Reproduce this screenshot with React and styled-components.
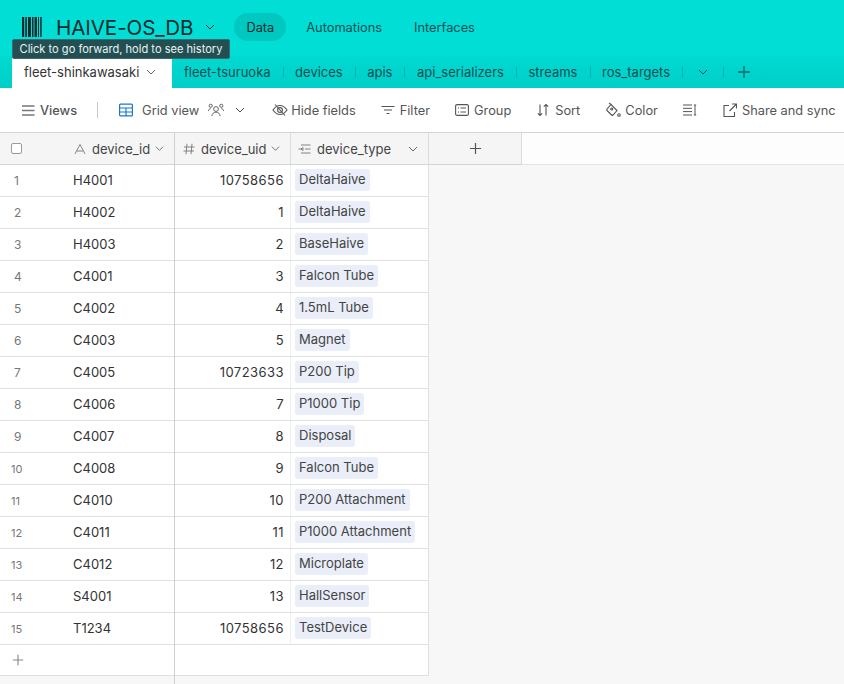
import React from 'react';
import styled, { createGlobalStyle } from 'styled-components';

const rows = [
  ['H4001', '10758656', 'DeltaHaive'],
  ['H4002', '1', 'DeltaHaive'],
  ['H4003', '2', 'BaseHaive'],
  ['C4001', '3', 'Falcon Tube'],
  ['C4002', '4', '1.5mL Tube'],
  ['C4003', '5', 'Magnet'],
  ['C4005', '10723633', 'P200 Tip'],
  ['C4006', '7', 'P1000 Tip'],
  ['C4007', '8', 'Disposal'],
  ['C4008', '9', 'Falcon Tube'],
  ['C4010', '10', 'P200 Attachment'],
  ['C4011', '11', 'P1000 Attachment'],
  ['C4012', '12', 'Microplate'],
  ['S4001', '13', 'HallSensor'],
  ['T1234', '10758656', 'TestDevice'],
];

const tabs = ['fleet-tsuruoka', 'devices', 'apis', 'api_serializers', 'streams', 'ros_targets'];

const Chevron = ({ size = 10, color = 'currentColor' }) => (
  <svg width={size} height={size} viewBox="0 0 10 10" fill="none" stroke={color} strokeWidth="1">
    <path d="M1 3l4 4 4-4" />
  </svg>
);

const Plus = ({ size = 14, color = 'currentColor' }) => (
  <svg width={size} height={size} viewBox="0 0 14 14" fill="none" stroke={color} strokeWidth="1.3">
    <path d="M7 1v12M1 7h12" />
  </svg>
);

const Icon = ({ w = 16, h = 16, children, color = '#555', sw = 1.1 }) => (
  <svg width={w} height={h} viewBox={`0 0 ${w} ${h}`} fill="none" stroke={color} strokeWidth={sw}>
    {children}
  </svg>
);

function App() {
  return (
    <Page>
      <GlobalStyle />
      <Header>
        <TopBar>
          <Barcode width="20" height="20" viewBox="0 0 20 20" fill="#0c2b2e">
            <path d="M0 0h2.200v20H0zM3.200 0h1.800v20H3.200zM6 0h3v20H6zM10 0h1.500v20H10zM12.500 0h2.500v20h-2.500zM16 0h1v20h-1zM18 0h.8v20H18zM19.300 0h.7v20h-.7z" />
          </Barcode>
          <BaseName>HAIVE-OS_DB</BaseName>
          <BaseChevron><Chevron color="#0c2b2e" /></BaseChevron>
          <NavPill $active>Data</NavPill>
          <NavPill>Automations</NavPill>
          <NavPill>Interfaces</NavPill>
        </TopBar>
        <TabBar>
          <ActiveTab>fleet-shinkawasaki<Chevron color="#666" /></ActiveTab>
          {tabs.map((t, i) => (
            <Tab key={t} $first={i === 0}>{t}</Tab>
          ))}
          <ChevronTab><Chevron color="#0a4d50" /></ChevronTab>
          <AddTab><Plus color="#0a6466" /></AddTab>
        </TabBar>
        <Tooltip>Click to go forward, hold to see history</Tooltip>
      </Header>

      <Toolbar>
        <ToolItem $left={22} $gap={5} $strong>
          <Icon w={13} h={13} color="#777" sw={1.4}><path d="M0 2h12.500M0 6.500h12.500M0 11h12.500" /></Icon>
          Views
        </ToolItem>
        <Divider />
        <ToolItem $left={21} $gap={9}>
          <Icon w={14} h={14} color="#1a76d2" sw={1.2}>
            <rect x=".6" y="1.100" width="12.800" height="11.800" rx="1" />
            <path d="M.6 5h12.800M.6 9h12.800M7 5v8" />
          </Icon>
          Grid view
        </ToolItem>
        <ToolItem $left={9}>
          <Icon w={16} h={14} sw={.9}>
            <circle cx="8" cy="6" r="2.400" />
            <path d="M3.800 13c.4-2.500 2-3.800 4.200-3.800s3.800 1.300 4.200 3.800" />
            <circle cx="2.700" cy="2.800" r="1.600" />
            <circle cx="13.300" cy="2.800" r="1.600" />
            <path d="M.3 8c.3-1.400 1-2.200 2.400-2.400M15.700 8c-.3-1.400-1-2.200-2.400-2.400" />
          </Icon>
        </ToolItem>
        <ToolItem $left={11}><Chevron color="#555" /></ToolItem>
        <ToolItem $left={27} $gap={3}>
          <Icon>
            <path d="M1 8c2-3 4.300-4.500 7-4.500S13 5 15 8c-2 3-4.300 4.500-7 4.500S3 11 1 8z" />
            <circle cx="8" cy="8" r="2.400" />
            <path d="M3 2.500l10 11" />
          </Icon>
          Hide fields
        </ToolItem>
        <ToolItem $left={25} $gap={5}>
          <Icon w={14} h={12} sw={1.2}><path d="M.5 2.500h13M3 6h8M5.500 9.500h3" /></Icon>
          Filter
        </ToolItem>
        <ToolItem $left={25} $gap={5}>
          <Icon w={14} h={14}>
            <rect x=".6" y="1.600" width="12.800" height="10.800" rx="1.500" />
            <path d="M3 5h1M5.500 5h5.500M3 9h1M5.500 9h5.500" />
          </Icon>
          Group
        </ToolItem>
        <ToolItem $left={26} $gap={6}>
          <Icon w={12} h={14}><path d="M3 1.500v11M.8 10.300L3 12.500l2.200-2.200M9 12.500v-11M6.800 3.700L9 1.500l2.200 2.200" /></Icon>
          Sort
        </ToolItem>
        <ToolItem $left={25} $gap={4}>
          <Icon>
            <path d="M6 2.500l6 6-4 4.500a1 1 0 0 1-1.400 0L2 8.500a1 1 0 0 1 0-1.400z" />
            <path d="M4 1l2 1.500" />
            <circle cx="6.700" cy="7" r="1" />
            <circle cx="14" cy="13" r="1.300" />
          </Icon>
          Color
        </ToolItem>
        <ToolItem $left={25}>
          <Icon w={14} h={12} sw={1}><path d="M0 1h9M0 4.300h9M0 7.600h9M0 11h9M12 1v10M10.800 1h2.400M10.800 11h2.400" /></Icon>
        </ToolItem>
        <ToolItem $left={26} $gap={5}>
          <Icon w={14} h={14}>
            <path d="M6 2.500H1v11h10.500V9" />
            <path d="M6.500 8L13 1.500M9 1h4.500v4.500" />
          </Icon>
          Share and sync
        </ToolItem>
      </Toolbar>

      <Grid>
        <LeftPane>
          <HeadRow>
            <CheckCell><CheckBox /></CheckCell>
            <HeadCell $pad={26}>
              <FieldIcon>
                <Icon w={12} h={12} color="#777" sw={.9}><path d="M1 11L6 1.500 11 11M3 8h6" /></Icon>
              </FieldIcon>
              <FieldName>device_id</FieldName>
              <Chevron size={9} color="#666" />
            </HeadCell>
          </HeadRow>
          {rows.map((r, i) => (
            <Row key={i}>
              <RowNumber $small={i >= 9}>{i + 1}</RowNumber>
              <IdCell>{r[0]}</IdCell>
            </Row>
          ))}
          <AddRow><Plus color="#888" size={12} /></AddRow>
        </LeftPane>
        <RightPane>
          <HeadRow>
            <HeadCell $w={116} $border $pad={8}>
              <FieldIcon>
                <Icon w={12} h={12} color="#777" sw={.9}><path d="M4 .8L3 11.200M9 .8L8 11.200M1 4h10.500M.5 8h10.500" /></Icon>
              </FieldIcon>
              <FieldName>device_uid</FieldName>
              <Chevron size={9} color="#666" />
            </HeadCell>
            <HeadCell $w={138} $border $pad={7}>
              <FieldIcon>
                <Icon w={13} h={12} color="#777" sw={.9}><path d="M3 2h9.500M.5 6h3.500M7 6h5.500M3 10h9.500M3 6l2-1.500v3z" /></Icon>
              </FieldIcon>
              <FieldName>device_type</FieldName>
              <TypeChevron><Chevron size={10} color="#666" /></TypeChevron>
            </HeadCell>
            <AddColumn><Plus color="#555" size={13} /></AddColumn>
            <HeadFiller />
          </HeadRow>
          {rows.map((r, i) => (
            <DataRow key={i}>
              <UidCell>{r[1]}</UidCell>
              <TypeCell><Chip>{r[2]}</Chip></TypeCell>
            </DataRow>
          ))}
          <EmptyRow />
        </RightPane>
      </Grid>
    </Page>
  );
}

const GlobalStyle = createGlobalStyle`
  html, body {
    margin: 0;
    padding: 0;
    height: 100%;
    overflow: hidden;
  }
  #root {
    height: 100%;
  }
  * {
    box-sizing: border-box;
  }
`;

const Page = styled.div`
  position: relative;
  display: flex;
  flex-direction: column;
  width: 844px;
  height: 684px;
  overflow: hidden;
  font-family: Inter, "Liberation Sans", sans-serif;
  font-size: 13px;
  color: #333;
  background: #f7f7f7;
`;

const Header = styled.div`
  flex: none;
  height: 88px;
  background: #00ded6;
`;

const TopBar = styled.div`
  display: flex;
  align-items: center;
  height: 56px;
  padding: 0 0 2px 22px;
`;

const Barcode = styled.svg`
  flex: none;
  margin-right: 14px;
`;

const BaseName = styled.div`
  font-size: 20.600px;
  font-weight: 400;
  color: #0c2b2e;
  letter-spacing: -0.1px;
`;

const BaseChevron = styled.div`
  display: flex;
  margin: 0 19px 0 12px;
`;

const NavPill = styled.div`
  height: 28px;
  padding: 0 12px;
  margin-right: 8px;
  display: flex;
  align-items: center;
  border-radius: 14px;
  font-size: 12.800px;
  color: ${(p) => (p.$active ? '#0c2b2e' : '#0a4d50')};
  background: ${(p) => (p.$active ? '#00c8c1' : 'transparent')};
`;

const TabBar = styled.div`
  display: flex;
  align-items: center;
  height: 32px;
  padding-left: 12px;
  background: linear-gradient(#00d9d1, #00cfc8);
`;

const ActiveTab = styled.div`
  display: flex;
  align-items: center;
  gap: 7px;
  width: 160px;
  height: 32px;
  padding-left: 12px;
  font-size: 13px;
  color: #333;
  background: #fff;
  border-radius: 3px 3px 0 0;
`;

const Tab = styled.div`
  display: flex;
  align-items: center;
  height: 32px;
  padding: 0 12px 0 ${(p) => (p.$first ? 12 : 12.5)}px;
  font-size: 13px;
  color: #0a4d50;
  position: relative;
  &::before {
    content: '';
    display: ${(p) => (p.$first ? 'none' : 'block')};
    position: absolute;
    left: 0;
    top: 10px;
    height: 12px;
    width: 1px;
    background: #00b5ae;
  }
`;

const ChevronTab = styled(Tab)`
  width: 41px;
  padding: 0 0 0 16px;
`;

const AddTab = styled(Tab)`
  padding: 0 15px 0 14px;
`;

const Tooltip = styled.div`
  position: absolute;
  left: 12px;
  top: 39px;
  width: 218px;
  height: 20px;
  display: flex;
  align-items: center;
  justify-content: center;
  font-size: 11.100px;
  color: #e8f4f4;
  background: #234f53;
  border: 1px solid #3f6a6d;
  border-radius: 2px;
`;

const Toolbar = styled.div`
  flex: none;
  display: flex;
  align-items: center;
  height: 45px;
  background: #fff;
  border-bottom: 1px solid #d4d4d4;
  white-space: nowrap;
`;

const ToolItem = styled.div`
  flex: none;
  display: flex;
  align-items: center;
  gap: ${(p) => p.$gap || 0}px;
  margin-left: ${(p) => p.$left}px;
  font-size: 12.800px;
  font-weight: ${(p) => (p.$strong ? 500 : 400)};
  color: #555;
`;

const Divider = styled.div`
  flex: none;
  width: 1px;
  height: 16px;
  margin-left: 20px;
  background: #c8c8c8;
`;

const Grid = styled.div`
  flex: 1;
  display: flex;
  min-height: 0;
`;

const LeftPane = styled.div`
  flex: none;
  width: 175px;
  border-right: 1px solid #cfcfcf;
`;

const RightPane = styled.div`
  flex: 1;
`;

const HeadRow = styled.div`
  display: flex;
  height: 32px;
`;

const HeadFiller = styled.div`
  flex: 1;
  background: #fdfdfd;
  border-bottom: 1px solid #e4e4e4;
`;

const CheckCell = styled.div`
  flex: none;
  width: 48px;
  display: flex;
  align-items: center;
  padding-left: 11px;
  background: #f5f5f5;
  border-bottom: 1px solid #d4d4d4;
`;

const CheckBox = styled.div`
  width: 11px;
  height: 11px;
  background: #fff;
  border: 1px solid #9a9a9a;
  border-radius: 2px;
`;

const HeadCell = styled.div`
  flex: ${(p) => (p.$w ? 'none' : 1)};
  display: flex;
  align-items: center;
  width: ${(p) => (p.$w ? `${p.$w}px` : 'auto')};
  padding-left: ${(p) => p.$pad}px;
  background: #f5f5f5;
  border-bottom: 1px solid #d4d4d4;
  border-right: ${(p) => (p.$border ? '1px solid #dcdcdc' : 'none')};
  font-size: 13px;
  color: #444;
`;

const FieldIcon = styled.div`
  display: flex;
  margin-right: 6px;
`;

const FieldName = styled.div`
  margin-right: 5px;
`;

const TypeChevron = styled.div`
  display: flex;
  margin-left: 12px;
`;

const AddColumn = styled.div`
  flex: none;
  width: 93px;
  display: flex;
  align-items: center;
  justify-content: center;
  background: #f5f5f5;
  border-bottom: 1px solid #d4d4d4;
  border-right: 1px solid #dcdcdc;
`;

const Row = styled.div`
  display: flex;
  align-items: center;
  height: 32px;
  background: #fff;
  border-bottom: 1px solid #e0e0e0;
`;

const RowNumber = styled.div`
  flex: none;
  width: 73px;
  padding-left: ${(p) => (p.$small ? 11 : 14)}px;
  font-size: ${(p) => (p.$small ? 11 : 12)}px;
  color: #777;
`;

const IdCell = styled.div`
  padding-bottom: 1px;
  font-size: 13px;
  color: #333;
`;

const AddRow = styled.div`
  display: flex;
  align-items: center;
  height: 31px;
  padding-left: 12px;
  background: #fff;
  border-bottom: 1px solid #e0e0e0;
`;

const DataRow = styled.div`
  display: flex;
  align-items: center;
  width: 254px;
  height: 32px;
  background: #fff;
  border-bottom: 1px solid #e0e0e0;
  border-right: 1px solid #e0e0e0;
`;

const EmptyRow = styled(DataRow)`
  height: 31px;
`;

const UidCell = styled.div`
  flex: none;
  display: flex;
  align-items: center;
  justify-content: flex-end;
  width: 116px;
  height: 100%;
  padding: 0 6px 1px 0;
  font-size: 13px;
  letter-spacing: 0.45px;
  color: #333;
  border-right: 1px solid #efefef;
`;

const TypeCell = styled.div`
  flex: 1;
  align-self: flex-start;
  padding: 4px 0 0 4px;
`;

const Chip = styled.span`
  display: block;
  width: fit-content;
  height: 22px;
  line-height: 20px;
  padding: 0 4px;
  font-size: 13px;
  color: #444;
  background: #e9eef8;
  border-radius: 3px;
`;

export default App;
